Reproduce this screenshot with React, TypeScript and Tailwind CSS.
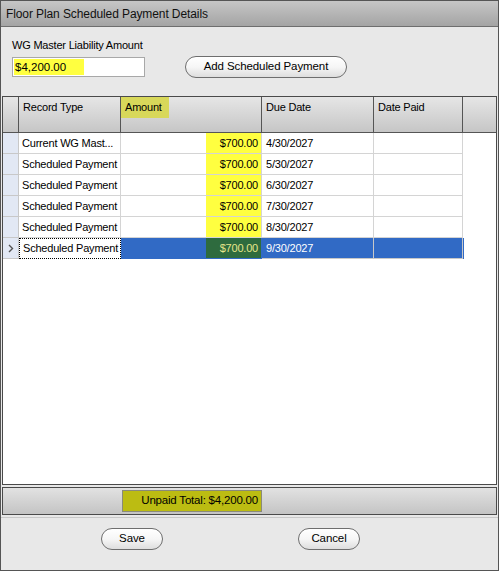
import React from "react";

const font = { fontFamily: '"Liberation Sans", Arial, sans-serif' };

const rows = [
  { type: "Current WG Mast...", due: "4/30/2027" },
  { type: "Scheduled Payment", due: "5/30/2027" },
  { type: "Scheduled Payment", due: "6/30/2027" },
  { type: "Scheduled Payment", due: "7/30/2027" },
  { type: "Scheduled Payment", due: "8/30/2027" },
  { type: "Scheduled Payment", due: "9/30/2027", selected: true },
];

function PillButton({ label, className }: { label: string; className: string }) {
  return (
    <div
      className={`flex items-center justify-center rounded-full border border-[#6e6e6e] bg-gradient-to-b from-white via-[#f6f6f6] to-[#dedede] text-[11.5px] tracking-[-0.1px] text-black shadow-[inset_0_1px_0_#fff] ${className}`}
    >
      {label}
    </div>
  );
}

export default function App() {
  return (
    <div
      style={font}
      className="w-[499px] h-[571px] flex flex-col border border-[#555] bg-[#e8e8e8] text-black overflow-hidden"
    >
      {/* Title bar */}
      <div className="h-[26px] shrink-0 flex items-center pl-[5px] bg-gradient-to-b from-[#c6c6c6] to-[#a4a4a4] border-b border-[#6e6e6e] text-[12px] tracking-[-0.1px] text-[#111]">
        Floor Plan Scheduled Payment Details
      </div>

      {/* Top form */}
      <div className="h-[69px] shrink-0 flex items-end pl-[11px] pb-[19px] gap-[40px]">
        <div className="w-[133px] flex flex-col gap-[5px]">
          <div className="text-[11px] tracking-[-0.2px] leading-[14px] whitespace-nowrap">WG Master Liability Amount</div>
          <div className="w-[133px] h-[20px] bg-white border border-[#a8a8a8] flex items-center pl-[1px]">
            <div className="h-[16px] w-[70px] bg-[#ffff40] text-[11.5px] leading-[16px] pl-[1px]">$4,200.00</div>
          </div>
        </div>
        <PillButton label="Add Scheduled Payment" className="w-[162px] h-[22px] mb-[-1px]" />
      </div>

      {/* Grid */}
      <div className="mx-[1px] flex-1 flex flex-col border border-[#4a4a4a] bg-white text-[11px] tracking-[-0.2px]">
        {/* Header */}
        <div className="h-[36px] shrink-0 grid grid-cols-[16px_102px_141px_112px_89px_1fr] bg-gradient-to-b from-[#e6e6e6] to-[#c6c6c6] border-b border-[#555]">
          <div className="border-r border-[#555]" />
          <div className="border-r border-[#555] pl-[4px] pt-[2px]">Record Type</div>
          <div className="border-r border-[#555]">
            <div className="w-[48px] h-[21px] bg-[#d8d85a] pl-[4px] pt-[2px]">Amount</div>
          </div>
          <div className="border-r border-[#555] pl-[4px] pt-[2px]">Due Date</div>
          <div className="border-r border-[#555] pl-[4px] pt-[2px]">Date Paid</div>
          <div />
        </div>

        {/* Rows */}
        <div className="flex-1 flex flex-col">
          {rows.map((r, i) => (
            <div
              key={i}
              className={`h-[21px] grid grid-cols-[16px_102px_141px_112px_89px] w-[461px] ${
                r.selected ? "bg-[#316ac5] text-white" : ""
              }`}
            >
              <div className="bg-[#e2e8f4] border-r border-b border-[#c8c8c8] flex items-center justify-center text-[#555]">
                {r.selected ? (
                  <svg width="6" height="9" viewBox="0 0 6 9">
                    <path d="M1 1 L4.5 4.5 L1 8" fill="none" stroke="#555" strokeWidth="1.4" />
                  </svg>
                ) : null}
              </div>
              <div
                className={`flex items-center pl-[3px] ${
                  r.selected
                    ? "bg-white text-black border border-dotted border-black"
                    : "border-r border-b border-[#d4d4d4]"
                }`}
              >
                <span className="whitespace-nowrap">{r.type}</span>
              </div>
              <div className={`flex justify-end border-r border-b ${r.selected ? "border-[#316ac5]" : "border-[#d4d4d4]"}`}>
                <div
                  className={`w-[55px] flex items-center justify-end pr-[3px] ${
                    r.selected ? "bg-[#2e6b3e] text-[#e6e68a]" : "bg-[#ffff40]"
                  }`}
                >
                  $700.00
                </div>
              </div>
              <div className={`flex items-center pl-[4px] border-r border-b ${r.selected ? "border-[#c8c8c8]" : "border-[#d4d4d4]"}`}>
                {r.due}
              </div>
              <div className={`border-r border-b ${r.selected ? "border-[#c8c8c8]" : "border-[#d4d4d4]"}`} />
            </div>
          ))}
        </div>
      </div>

      {/* Footer */}
      <div className="mx-[1px] mt-[2px] h-[28px] shrink-0 border border-[#4a4a4a] bg-gradient-to-b from-[#e2e2e2] to-[#c4c4c4] flex items-center pl-[119px]">
        <div className="w-[140px] h-[22px] bg-[#bcbc12] border border-[#8a8a7a] flex items-center justify-end pr-[3px] text-[11.5px] tracking-[-0.2px]">
          Unpaid Total: $4,200.00
        </div>
      </div>

      {/* Bottom buttons */}
      <div className="mt-[2px] h-[53px] shrink-0 border-t border-[#c8c8c8] flex items-start pt-[10px] pl-[100px] gap-[135px]">
        <PillButton label="Save" className="w-[62px] h-[22px]" />
        <PillButton label="Cancel" className="w-[62px] h-[22px]" />
      </div>
    </div>
  );
}
